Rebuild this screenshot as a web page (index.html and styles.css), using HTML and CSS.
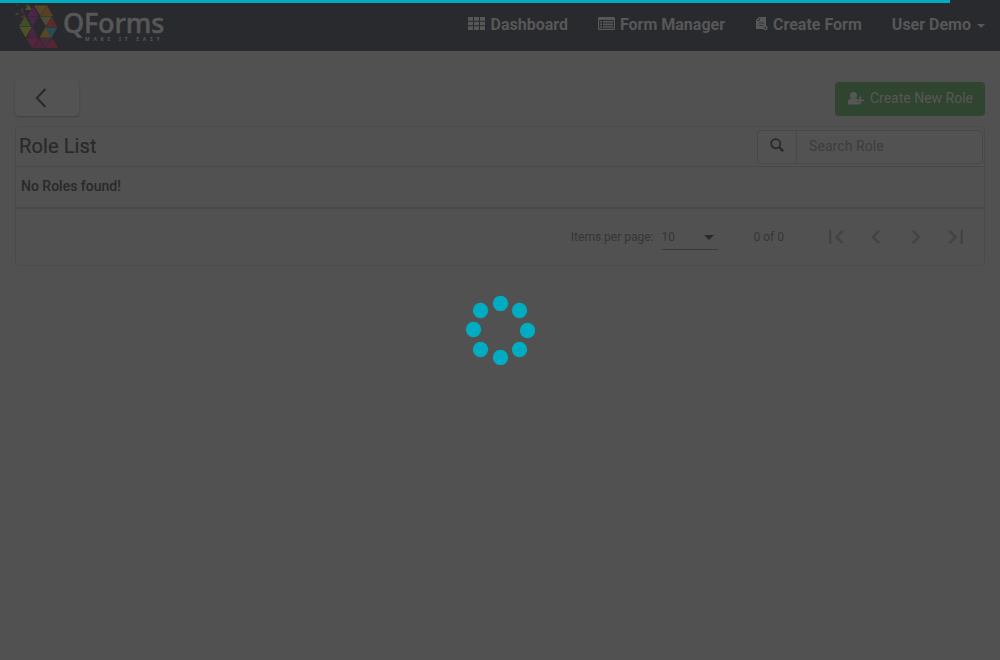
FILE: index.html
```html
<!DOCTYPE html>
<html lang="en">
<head>
<meta charset="utf-8">
<title>QForms</title>
<link rel="stylesheet" href="styles.css">
</head>
<body>
<div class="progress"></div>
<header class="navbar">
  <div class="brand">
    <svg class="brand-mark" width="44" height="46" viewBox="15 3 44 46">
      <path fill="#285154" d="M16 5l2-1v2zM25 7l3-3 1 3z"/>
      <path fill="#61312c" d="M20 10l3-2v4z"/>
      <path fill="#5c5427" d="M25 10l4-5 3 5z"/>
      <path fill="#522343" d="M20 13l3-3 2 4z"/>
      <path fill="#36522c" d="M15 15l2-3 2 3z"/>
      <path fill="#5b4829" d="M34 5.500h13l-6.500 10.500z"/>
      <path fill="#4d2549" d="M27 16l6-10 6 10z"/>
      <path fill="#5b4426" d="M41 16l6-10.500 6 10.500z"/>
      <path fill="#5c2932" d="M20 17l5-3 1 6z"/>
      <path fill="#3d5429" d="M19 26.500l6-10.500 6 10.500z"/>
      <path fill="#4d2549" d="M27 16.500h11.500l-6 10.500z"/>
      <path fill="#4f5136" d="M40 16.500h12.500l-6 10.500z"/>
      <path fill="#612a2a" d="M45 27l6.500-10.500 6 10.500z"/>
      <path fill="#535624" d="M19.500 27H32l-6.500 10.500z"/>
      <path fill="#4d2545" d="M26.500 37.500l6-10.500 5.500 10.500z"/>
      <path fill="#5f4a24" d="M39.500 37.500l6-10.500 6 10.500z"/>
      <path fill="#27505b" d="M45.500 27.500h12l-6 10.500z"/>
      <path fill="#5d2440" d="M26 38h12.500l-6 10.500z"/>
      <path fill="#53243a" d="M33 48l6-10 6 10z"/>
      <path fill="#4a2a40" d="M40 38h11.500l-6 10z"/>
      <path fill="#5d2638" d="M46 48l6-10 6 10z"/>
    </svg>
    <div class="brand-text">
      <span class="brand-name">QForms</span>
      <span class="brand-tag">MAKE IT EASY</span>
    </div>
  </div>
  <nav class="nav">
    <a class="nav-link">
      <svg width="18" height="13" viewBox="0 0 18 13" fill="currentColor"><path d="M0 0h5v3.700H0zM6 0h5v3.700H6zM12 0h5v3.700h-5zM0 4.700h5v3.600H0zM6 4.700h5v3.600H6zM12 4.700h5v3.600h-5zM0 9.300h5V13H0zM6 9.300h5V13H6zM12 9.300h5V13h-5z"/></svg>
      <span>Dashboard</span>
    </a>
    <a class="nav-link">
      <svg width="17" height="13" viewBox="0 0 17 13" fill="currentColor"><path fill-rule="evenodd" d="M1.200 0h14.600Q17 0 17 1.200v10.600q0 1.200-1.200 1.200H1.200Q0 13 0 11.800V1.200Q0 0 1.200 0zM1.200 3v8.800h14.600V3z"/><path d="M2 4h2v1.600H2zM5 4h10v1.600H5zM2 6.600h2v1.600H2zM5 6.600h10v1.600H5zM2 9.200h2v1.600H2zM5 9.200h10v1.600H5z"/></svg>
      <span>Form Manager</span>
    </a>
    <a class="nav-link nav-create">
      <svg width="13" height="14" viewBox="-1 0 13 14" fill="currentColor"><path d="M3 0h7v8.500L7 10l.5 2H0V3z"/><path class="paper-line" d="M1 3.500h2.500V1M3 6h5M3 8.500h4"/><circle cx="9.300" cy="10.800" r="1.600" fill="none" stroke="currentColor" stroke-width="1.500"/></svg>
      <span>Create Form</span>
    </a>
    <a class="nav-link nav-user"><span>User Demo</span><i class="caret"></i></a>
  </nav>
</header>
<main class="content">
  <div class="toolbar">
    <button class="back"><svg width="12" height="20" viewBox="0 0 12 20"><path d="M10.500 1L1.800 10l8.700 9" fill="none" stroke="currentColor" stroke-width="2"/></svg></button>
    <button class="create">
      <svg width="16" height="13" viewBox="0 0 16 13" fill="currentColor"><circle cx="5.500" cy="3.500" r="3.500"/><path d="M0 12.500V9.500Q0 7 3 6.500q2.500 1.500 5 0l1 .5v3h2v2.500zM11.300 4.500h1.800v3H16v1.800h-2.900v3h-1.800v-3H8.500V7.500h2.800z"/></svg>
      <span>Create New Role</span>
    </button>
  </div>
  <section class="panel">
    <div class="panel-head">
      <h1 class="title">Role List</h1>
      <div class="search">
        <span class="search-icon"><svg width="14" height="14" viewBox="0 0 14 14" fill="none" stroke="currentColor"><circle cx="5.700" cy="5.700" r="4.600" stroke-width="1.700"/><path d="M9 9l4.200 4.200" stroke-width="2.400"/></svg></span>
        <span class="search-input">Search Role</span>
      </div>
    </div>
    <div class="empty">No Roles found!</div>
    <div class="pager">
      <span class="pager-label">Items per page:</span>
      <span class="select"><span>10</span><i class="arrow"></i></span>
      <span class="range">0 of 0</span>
      <div class="pages">
        <svg viewBox="0 0 24 24"><path d="M18.410 16.590L13.820 12l4.590-4.590L17 6l-6 6 6 6zM6 6h2v12H6z"/></svg>
        <svg viewBox="0 0 24 24"><path d="M15.410 7.410L14 6l-6 6 6 6 1.410-1.410L10.830 12z"/></svg>
        <svg viewBox="0 0 24 24"><path d="M10 6L8.590 7.410 13.170 12l-4.580 4.590L10 18l6-6z"/></svg>
        <svg viewBox="0 0 24 24"><path d="M5.590 7.410L10.180 12l-4.590 4.590L7 18l6-6-6-6zM16 6h2v12h-2z"/></svg>
      </div>
    </div>
  </section>
</main>
<svg class="spinner" width="70" height="70" viewBox="0 0 70 70">
  <circle cx="35.500" cy="8.500" r="7.700"/><circle cx="54.500" cy="15.500" r="7.700"/><circle cx="62.500" cy="35.500" r="7.700"/><circle cx="54.500" cy="54.500" r="7.700"/>
  <circle cx="35.500" cy="62.500" r="7.700"/><circle cx="15.500" cy="54.500" r="7.700"/><circle cx="8.500" cy="34.500" r="7.700"/><circle cx="15.500" cy="15.500" r="7.700"/>
</svg>
</body>
</html>
```
FILE: styles.css
```css
* { box-sizing: border-box; }
body { margin: 0; height: 660px; overflow: hidden; background: #515151; color: #292929; font: 14px/20px Roboto, sans-serif; }
button { border: 0; font: inherit; }
.progress { position: absolute; top: 0; left: 0; width: 950px; height: 3px; background: #00acc1; }
.navbar { height: 51px; padding: 0 15px; display: flex; justify-content: space-between; background: #292a2d; color: #575757; }
.brand { display: flex; padding-top: 3px; }
.brand-mark { opacity: .9; }
.brand-text { display: flex; flex-direction: column; padding: 5px 0 0 4px; }
.brand-name { font: 500 27px/29px "Noto Sans", sans-serif; letter-spacing: -.15px; -webkit-text-stroke: .5px currentColor; }
.brand-tag { margin: -1px 0 0 22px; font: 700 5px/6px "Noto Sans", sans-serif; letter-spacing: 3.700px; white-space: nowrap; }
.nav { display: flex; gap: 30px; height: 49px; align-items: center; font-size: 16px; font-weight: 700; }
.nav-link { display: flex; align-items: center; gap: 5px; }
.nav-link svg { margin-bottom: 2px; }
.nav-user { gap: 6px; }
.paper-line { fill: none; stroke: #292a2d; stroke-width: .7; }
.caret { border: 4px solid transparent; border-top-color: currentColor; border-bottom: 0; margin-top: 2px; }
.content { padding: 29px 15px 0; }
.toolbar { display: flex; justify-content: space-between; height: 46px; }
.back { width: 64px; height: 36px; padding: 0 0 0 20px; display: flex; align-items: center; background: #535353; color: #292929; border-radius: 4px; box-shadow: 0 1px 2px #404040; }
.create { width: 150px; height: 34px; margin-top: 2px; padding: 0 0 2px 1px; display: flex; align-items: center; justify-content: center; gap: 6px; border-radius: 4px; background: #304530; color: #575757; }
.panel { height: 140px; border: 1px solid #4b4b4b; border-radius: 4px; }
.panel-head { height: 39px; display: flex; justify-content: space-between; padding: 3px 1px 0 3px; }
.title { margin: 0; font-size: 20px; line-height: 33px; font-weight: 400; letter-spacing: .1px; -webkit-text-stroke: .2px currentColor; }
.search { display: flex; width: 226px; height: 34px; border: 1px solid #484848; border-radius: 4px; background: #525252; }
.search-icon { width: 39px; border-right: 1px solid #484848; display: flex; align-items: center; justify-content: center; padding-bottom: 4px; }
.search-input { padding-left: 12px; line-height: 31px; color: #3d3d3d; letter-spacing: .08px; }
.empty { height: 43px; padding: 0 5px; line-height: 38px; font-weight: 500; border-top: 1px solid #494949; border-bottom: 2px solid #4a4a4a; }
.pager { height: 56px; display: flex; align-items: center; justify-content: flex-end; font-size: 12px; color: #363636; padding-right: 8px; }
.pager-label { margin-right: 8px; }
.select { width: 56px; height: 25px; border-bottom: 1px solid #3a3a3a; display: flex; align-items: center; justify-content: space-between; padding-right: 4px; }
.arrow { border: 5px solid transparent; border-top-color: #292929; border-bottom: 0; margin-top: 1px; }
.range { margin: 0 32px 0 36px; }
.pages { display: flex; }
.pages svg { width: 40px; height: 28px; fill: #434343; }
.spinner { position: absolute; left: 465px; top: 295px; fill: #00acc1; }
```
